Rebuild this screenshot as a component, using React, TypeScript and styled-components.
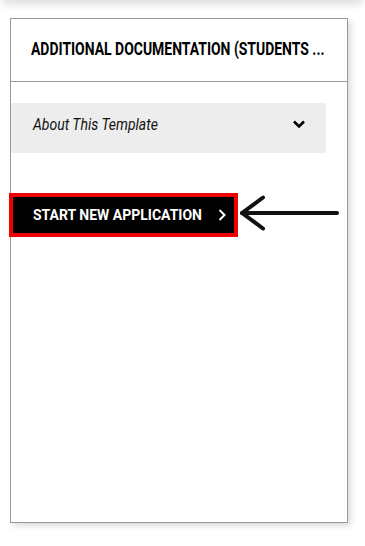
import React from "react";
import styled, { createGlobalStyle } from "styled-components";

const Global = createGlobalStyle`
  html, body { margin: 0; padding: 0; background: #fff; }
  body { font-family: Roboto, "Liberation Sans", sans-serif; width: 365px; height: 546px; overflow: hidden; }
`;

const Page = styled.div`
  position: relative;
  width: 365px;
  height: 546px;
  display: flex;
  flex-direction: column;
`;

const TopShadow = styled.div`
  height: 0;
  margin: 0 6px;
  box-shadow: 0 0 9px 3px rgba(0, 0, 0, 0.2);
`;

const Card = styled.div`
  margin: 18px 0 0 10px;
  width: 338px;
  height: 505px;
  box-sizing: border-box;
  border: 1px solid #9a9a9a;
  background: #fff;
  box-shadow: 3px 3px 6px rgba(0, 0, 0, 0.14);
  display: flex;
  flex-direction: column;
`;

const Header = styled.div`
  height: 63px;
  box-sizing: border-box;
  border-bottom: 1px solid #9a9a9a;
  display: flex;
  align-items: center;
  padding: 0 0 3px 20px;
  overflow: hidden;
`;

const Title = styled.h2`
  margin: 0;
  font-family: Roboto, "Liberation Sans", sans-serif;
  font-weight: 700;
  font-size: 18px;
  color: #000;
  white-space: nowrap;
  transform: scaleX(0.775);
  transform-origin: left center;
`;

const Body = styled.div`
  display: flex;
  flex-direction: column;
  align-items: flex-start;
  padding-top: 21px;
`;

const Accordion = styled.div`
  width: 315px;
  height: 50px;
  background: #ededed;
  display: flex;
  align-items: center;
  justify-content: space-between;
  padding: 0 20px 8px 22px;
  box-sizing: border-box;
`;

const AccTitle = styled.span`
  font-family: Roboto, "Liberation Sans", sans-serif;
  font-style: italic;
  font-size: 16px;
  color: #111;
  display: inline-block;
  transform: scaleX(0.875);
  transform-origin: left center;
`;

const ButtonWrap = styled.div`
  position: relative;
  margin: 40px 0 0 -2px;
`;

const StartButton = styled.button`
  width: 229px;
  height: 44px;
  box-sizing: border-box;
  border: 4px solid #ee0000;
  background: #000;
  color: #fff;
  display: flex;
  align-items: center;
  justify-content: space-between;
  padding: 0 6px 0 20px;
  font-family: Roboto, "Liberation Sans", sans-serif;
  font-weight: 700;
  font-size: 14px;
  cursor: pointer;
`;

const Arrow = styled.svg`
  position: absolute;
  left: 218px;
  top: 0;
`;

export default function App() {
  return (
    <>
      <Global />
      <Page>
        <TopShadow />
        <Card>
          <Header>
            <Title>ADDITIONAL DOCUMENTATION (STUDENTS ...</Title>
          </Header>
          <Body>
            <Accordion>
              <AccTitle>About This Template</AccTitle>
              <svg width="14" height="10" viewBox="0 0 14 10">
                <path d="M2 2.5 L7 7.5 L12 2.5" fill="none" stroke="#000" strokeWidth="2.6" />
              </svg>
            </Accordion>
            <ButtonWrap>
              <StartButton>
                <span>START NEW APPLICATION</span>
                <svg width="12" height="14" viewBox="0 0 12 14">
                  <path d="M3.5 2 L8.5 7 L3.5 12" fill="none" stroke="#fff" strokeWidth="2" />
                </svg>
              </StartButton>
              <Arrow width="115" height="44" viewBox="0 0 115 44">
                <g fill="none" stroke="#111" strokeWidth="4" strokeLinecap="round" strokeLinejoin="round">
                  <path d="M15 20 L110 20" />
                  <path d="M36 4.5 L15 20 L36 35.5" />
                </g>
              </Arrow>
            </ButtonWrap>
          </Body>
        </Card>
      </Page>
    </>
  );
}
